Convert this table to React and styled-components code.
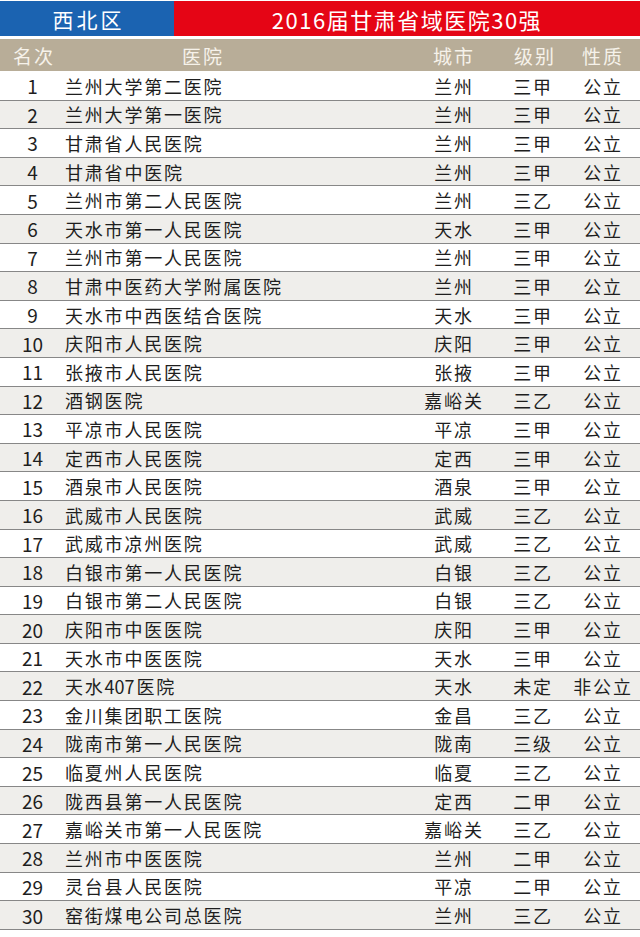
import styled, { createGlobalStyle } from 'styled-components';

const GlobalStyle = createGlobalStyle`
  body {
    margin: 0;
    background: #ffffff;
    font-family: "Noto Sans CJK SC", "Noto Sans", sans-serif;
  }
`;

const rows = [
	['兰州大学第二医院', '兰州', '三甲', '公立'],
	['兰州大学第一医院', '兰州', '三甲', '公立'],
	['甘肃省人民医院', '兰州', '三甲', '公立'],
	['甘肃省中医院', '兰州', '三甲', '公立'],
	['兰州市第二人民医院', '兰州', '三乙', '公立'],
	['天水市第一人民医院', '天水', '三甲', '公立'],
	['兰州市第一人民医院', '兰州', '三甲', '公立'],
	['甘肃中医药大学附属医院', '兰州', '三甲', '公立'],
	['天水市中西医结合医院', '天水', '三甲', '公立'],
	['庆阳市人民医院', '庆阳', '三甲', '公立'],
	['张掖市人民医院', '张掖', '三甲', '公立'],
	['酒钢医院', '嘉峪关', '三乙', '公立'],
	['平凉市人民医院', '平凉', '三甲', '公立'],
	['定西市人民医院', '定西', '三甲', '公立'],
	['酒泉市人民医院', '酒泉', '三甲', '公立'],
	['武威市人民医院', '武威', '三乙', '公立'],
	['武威市凉州医院', '武威', '三乙', '公立'],
	['白银市第一人民医院', '白银', '三乙', '公立'],
	['白银市第二人民医院', '白银', '三乙', '公立'],
	['庆阳市中医医院', '庆阳', '三甲', '公立'],
	['天水市中医医院', '天水', '三甲', '公立'],
	['天水407医院', '天水', '未定', '非公立'],
	['金川集团职工医院', '金昌', '三乙', '公立'],
	['陇南市第一人民医院', '陇南', '三级', '公立'],
	['临夏州人民医院', '临夏', '三乙', '公立'],
	['陇西县第一人民医院', '定西', '二甲', '公立'],
	['嘉峪关市第一人民医院', '嘉峪关', '三乙', '公立'],
	['兰州市中医医院', '兰州', '二甲', '公立'],
	['灵台县人民医院', '平凉', '二甲', '公立'],
	['窑街煤电公司总医院', '兰州', '三乙', '公立'],
];

const Page = styled.div`
	width: 640px;
	padding-top: 1px;
`;

const TitleBar = styled.div`
	display: flex;
	height: 35px;
	color: #ffffff;
`;

const Region = styled.div`
	width: 174px;
	background: #1b63b1;
	display: flex;
	align-items: center;
	justify-content: center;
	font-size: 21px;
	letter-spacing: 3px;
	padding-left: 3px;
	box-sizing: border-box;
`;

const Title = styled.div`
	flex: 1;
	background: #e50515;
	display: flex;
	align-items: center;
	justify-content: center;
	letter-spacing: 1.5px;
	font-size: 22px;
`;

const Grid = styled.div`
	display: grid;
	grid-template-columns: 65px 349px 80px 78px 62px;
	align-items: center;
`;

const HeadRow = styled(Grid)`
	margin-top: 3px;
	height: 32px;
	background: #b8ad98;
	color: #f6f2ea;
	font-size: 19px;
	letter-spacing: 2px;
`;

const Row = styled(Grid)`
	box-sizing: border-box;
	height: 28.6px;
	border-bottom: 1.5px solid #878787;
	background: ${p => (p.$shade ? '#efeeeb' : '#ffffff')};
	color: #1e1e1e;
	font-size: 18px;
	letter-spacing: 1.8px;
	&:first-of-type {
		margin-top: 1px;
	}
`;

const Cell = styled.div`
	text-align: ${p => p.$align || 'center'};
	padding-left: ${p => p.$pad || 0}px;
	white-space: nowrap;
	line-height: 1;
`;

const Rank = styled(Cell)`
	letter-spacing: 0;
	font-size: 19px;
`;

const Num = styled.span`
	letter-spacing: 0;
	margin-right: 1.8px;
`;

// keep digits tight inside names like 天水407医院
const renderName = name =>
	name
		.split(/(\d+)/)
		.map((part, i) => (/^\d+$/.test(part) ? <Num key={i}>{part}</Num> : part));

export default function App() {
	return (
		<Page>
			<GlobalStyle />
			<TitleBar>
				<Region>西北区</Region>
				<Title>2016届甘肃省域医院30强</Title>
			</TitleBar>
			<HeadRow>
				<Cell $pad={3}>名次</Cell>
				<Cell $align='left' $pad={117}>医院</Cell>
				<Cell>城市</Cell>
				<Cell $pad={4}>级别</Cell>
				<Cell>性质</Cell>
			</HeadRow>
			<div>
				{rows.map(([name, city, level, kind], i) => (
					<Row key={name} $shade={i % 2 === 1}>
						<Rank>{i + 1}</Rank>
						<Cell $align='left'>{renderName(name)}</Cell>
						<Cell>{city}</Cell>
						<Cell>{level}</Cell>
						<Cell>{kind}</Cell>
					</Row>
				))}
			</div>
		</Page>
	);
}
